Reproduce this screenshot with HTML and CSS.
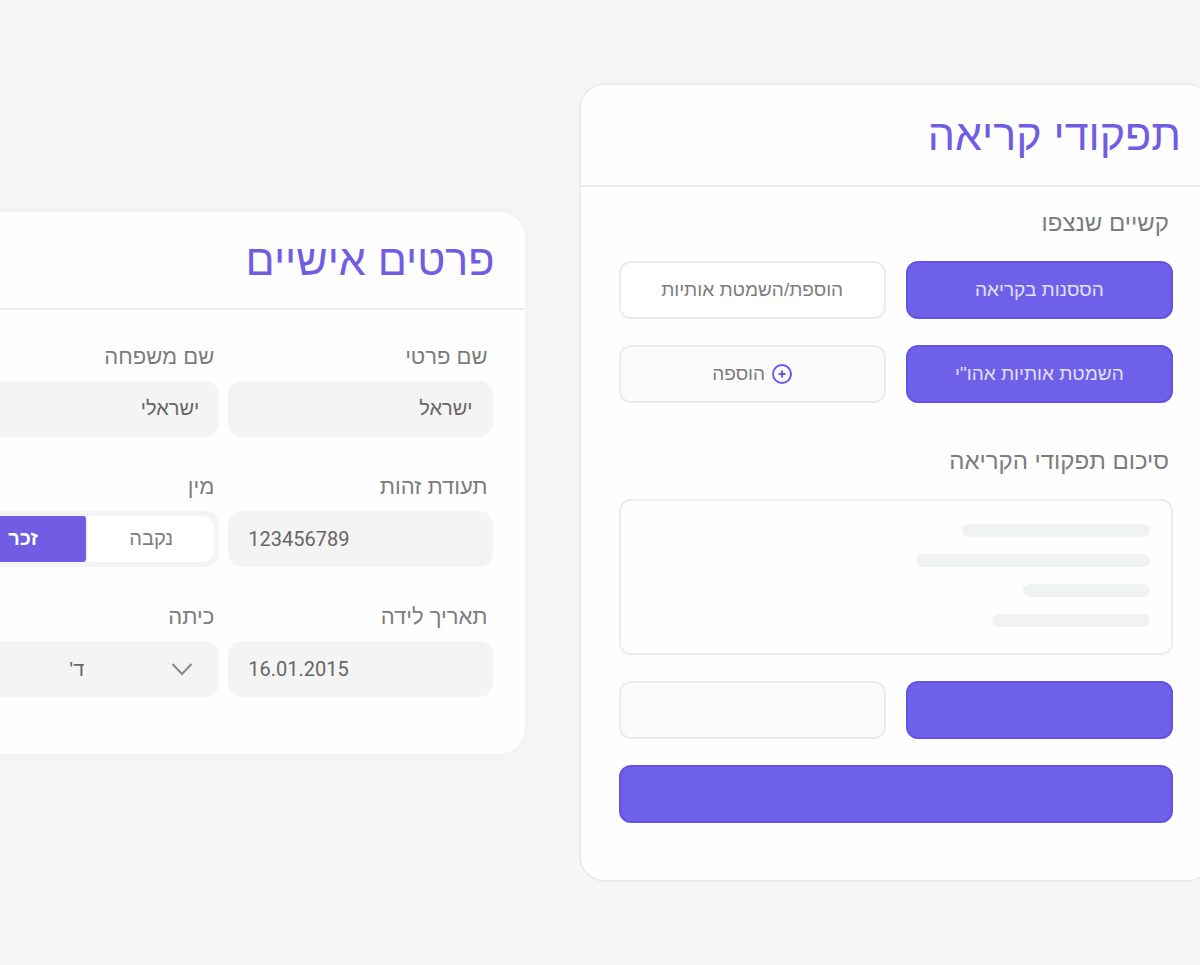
FILE: index.html
```html
<!DOCTYPE html>
<html lang="he" dir="rtl">
<head>
  <meta charset="UTF-8" />
  <meta name="viewport" content="width=device-width, initial-scale=1.0" />
  <title>תפקודי קריאה</title>
  <link rel="stylesheet" href="styles.css">
</head>
<body>
  <main class="page">
    <div class="cards">

      <!-- תפקודי קריאה -->
      <section class="card reading-card">
        <h1 class="card-title">תפקודי קריאה</h1>
        <div class="card-body">
          <h2 class="section-label">קשיים שנצפו</h2>
          <div class="button-grid">
            <button class="option-button selected" type="button" aria-pressed="true">הססנות בקריאה</button>
            <button class="option-button" type="button" aria-pressed="false">הוספת/השמטת אותיות</button>
            <button class="option-button selected" type="button" aria-pressed="true">השמטת אותיות אהו"י</button>
            <button class="option-button muted" type="button">
              <svg class="plus-icon" viewBox="0 0 20 20" aria-hidden="true">
                <circle cx="10" cy="10" r="9" />
                <path d="M10 6.5v7M6.5 10h7" />
              </svg>
              הוספה
            </button>
          </div>

          <h2 class="section-label">סיכום תפקודי הקריאה</h2>
          <div class="summary">
            <span class="line line-1"></span>
            <span class="line line-2"></span>
            <span class="line line-3"></span>
            <span class="line line-4"></span>
          </div>

          <div class="button-grid">
            <button class="option-button selected" type="button" aria-label="שמירה"></button>
            <button class="option-button muted" type="button" aria-label="ביטול"></button>
            <button class="option-button selected wide" type="button" aria-label="המשך"></button>
          </div>
        </div>
      </section>

      <!-- פרטים אישיים -->
      <section class="card details-card">
        <h1 class="card-title">פרטים אישיים</h1>
        <form class="details-form">
          <div class="field">
            <label for="firstName">שם פרטי</label>
            <input class="control" id="firstName" type="text" value="ישראל">
          </div>
          <div class="field">
            <label for="lastName">שם משפחה</label>
            <input class="control" id="lastName" type="text" value="ישראלי">
          </div>
          <div class="field">
            <label for="idNumber">תעודת זהות</label>
            <input class="control number" id="idNumber" type="text" dir="ltr" value="123456789">
          </div>
          <fieldset class="field">
            <legend>מין</legend>
            <div class="toggle">
              <label class="toggle-item"><input type="radio" name="gender" value="f"><span>נקבה</span></label>
              <label class="toggle-item"><input type="radio" name="gender" value="m" checked><span>זכר</span></label>
            </div>
          </fieldset>
          <div class="field">
            <label for="birthDate">תאריך לידה</label>
            <input class="control number" id="birthDate" type="text" dir="ltr" value="16.01.2015">
          </div>
          <div class="field">
            <label for="grade">כיתה</label>
            <div class="select-wrap">
              <select class="control" id="grade">
                <option>ד'</option>
              </select>
              <svg class="chevron" viewBox="0 0 22 14" aria-hidden="true">
                <path d="M1.5 2l9.5 10 9.5-10" />
              </svg>
            </div>
          </div>
        </form>
      </section>

    </div>
  </main>
</body>
</html>
```
FILE: styles.css
```css
* {
  margin: 0;
  padding: 0;
  box-sizing: border-box;
  font-family: "Liberation Sans", Arial, sans-serif;
}
body {
  background-color: #f6f6f6;
  color: #7c7c7c;
}
.page {
  min-height: 100vh;
  display: flex;
  overflow: hidden;
}
/* the row of cards runs past both sides of the window */
.cards {
  flex: 1;
  display: grid;
  grid-template-columns: 634fr 601fr;
  gap: 54px;
  align-items: center;
  margin: 0 -13px 0 -77px;
}
.card {
  background-color: #fefefe;
  border-radius: 26px;
}
.reading-card {
  border: 2px solid #ececec;
}
.details-card {
  box-shadow: 0 0 24px rgba(0, 0, 0, 0.03);
}
.card-title {
  padding: 20px 30px;
  border-bottom: 2px solid #ececec;
  color: #705de4;
  font-size: 43px;
  font-weight: 400;
  line-height: 60px;
}
.details-card .card-title {
  padding: 18px 30px;
}

/* reading card */
.card-body {
  padding: 20px 38px 57px;
}
.section-label {
  margin-bottom: 22px;
  padding: 0 4px;
  font-size: 24px;
  font-weight: 400;
  line-height: 32px;
}
.button-grid {
  display: grid;
  grid-template-columns: 1fr 1fr;
  gap: 26px 20px;
}
.button-grid + .section-label {
  margin-top: 42px;
}
.option-button {
  display: flex;
  align-items: center;
  justify-content: center;
  gap: 7px;
  height: 58px;
  border: 2px solid #ececec;
  border-radius: 12px;
  background-color: #ffffff;
  color: #7c7c7c;
  font-size: 19px;
  cursor: pointer;
}
.option-button.muted {
  background-color: #fafafa;
}
.option-button.selected {
  border-color: #6452e6;
  background-color: #6f60ea;
  color: #e4e0fb;
}
.option-button.wide {
  grid-column: 1 / -1;
}
.plus-icon {
  width: 20px;
  height: 20px;
  fill: none;
  stroke: #6a58ea;
  stroke-width: 2;
}
.summary {
  display: flex;
  flex-direction: column;
  gap: 17px;
  margin-bottom: 26px;
  padding: 23px 21px 26px;
  border: 2px solid #ececec;
  border-radius: 12px;
}
.line {
  height: 13px;
  border-radius: 7px;
  background-color: #f1f2f2;
}
.line-1 { width: 37%; }
.line-2 { width: 46%; }
.line-3 { width: 25%; }
.line-4 { width: 31%; }

/* details card */
.details-form {
  display: grid;
  grid-template-columns: 1fr 1fr;
  gap: 34px 9px;
  padding: 31px 32px 57px;
}
.field {
  min-width: 0;
  border: none;
}
.field > label,
.field > legend {
  display: block;
  margin-bottom: 8px;
  padding: 0 5px;
  font-size: 22px;
  line-height: 32px;
}
.control {
  display: block;
  width: 100%;
  height: 56px;
  padding: 0 20px;
  border: none;
  border-radius: 14px;
  background-color: #f4f4f4;
  color: #666666;
  font-size: 20px;
}
.control.number {
  font-family: Roboto, "Liberation Sans", sans-serif;
}
.toggle {
  display: grid;
  grid-template-columns: 1fr 1fr;
  gap: 2px;
  height: 56px;
  padding: 5px;
  border-radius: 14px;
  background-color: #f4f4f4;
}
.toggle-item {
  display: flex;
  cursor: pointer;
}
.toggle-item input {
  appearance: none;
}
.toggle-item span {
  flex: 1;
  display: flex;
  align-items: center;
  justify-content: center;
  border-radius: 3px;
  background-color: #ffffff;
  font-size: 20px;
}
.toggle-item:first-child span {
  border-radius: 3px 12px 12px 3px;
}
.toggle-item:last-child span {
  border-radius: 12px 3px 3px 12px;
}
.toggle-item input:checked + span {
  background-color: #705de4;
  color: #ffffff;
  font-weight: 700;
}
.select-wrap {
  position: relative;
}
.select-wrap .control {
  appearance: none;
  padding-right: 135px;
}
.chevron {
  position: absolute;
  top: 21px;
  right: 26px;
  width: 22px;
  height: 14px;
  fill: none;
  stroke: #8a8a8a;
  stroke-width: 2;
  pointer-events: none;
}
```
